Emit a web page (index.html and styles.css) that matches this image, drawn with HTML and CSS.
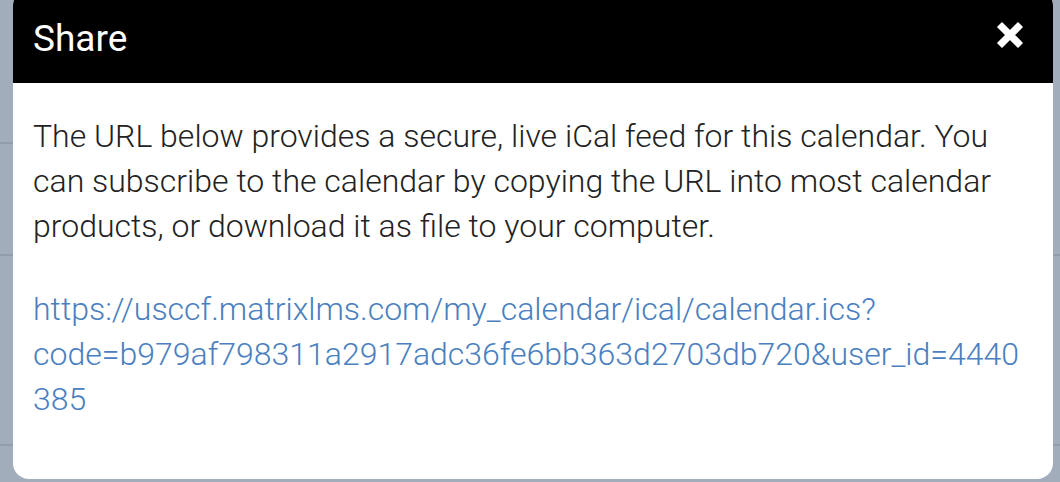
FILE: index.html
```html
<!DOCTYPE html>
<html lang="en">
<head>
<meta charset="utf-8">
<title>Share</title>
<link rel="stylesheet" href="styles.css">
</head>
<body>
<div class="backdrop">
  <div class="modal">
    <div class="modal-header">
      <h2 class="modal-title">Share</h2>
      <button class="close" aria-label="Close">
        <svg viewBox="-1 -1 26 26" width="26" height="26" aria-hidden="true">
          <path d="M0 4 L4 0 L12 8 L20 0 L24 4 L16 12 L24 20 L20 24 L12 16 L4 24 L0 20 L8 12 Z" fill="#fff" stroke="#fff" stroke-width="1.6" stroke-linejoin="round"/>
        </svg>
      </button>
    </div>
    <div class="modal-body">
      <p class="intro">The URL below provides a secure, live iCal feed for this calendar. You can subscribe to the calendar by copying the URL into most calendar products, or download it as file to your computer.</p>
      <p class="feed"><a href="#">https://usccf.matrixlms.com/my_calendar/ical/calendar.ics?<wbr>code=b979af798311a2917adc36fe6bb363d2703db720&amp;user_id=4440385</a></p>
    </div>
  </div>
</div>
</body>
</html>
```

FILE: styles.css
```css
* { box-sizing: border-box; }
html, body {
  margin: 0;
  padding: 0;
  height: 100%;
  overflow: hidden;
}
body {
  font-family: Roboto, "Liberation Sans", sans-serif;
  background-color: #a2adbb;
  background-image:
    linear-gradient(to bottom, transparent 142px, #929dab 142px, #929dab 144px, transparent 144px),
    linear-gradient(to bottom, transparent 254px, #929dab 254px, #929dab 256px, transparent 256px),
    linear-gradient(to bottom, transparent 444px, #929dab 444px, #929dab 446px, transparent 446px);
  background-repeat: no-repeat;
  background-size: 13px 100%, 100% 100%, 100% 100%;
  background-position: 0 0, 0 0, 0 0;
}
.backdrop {
  padding: 0 7px 0 13px;
}
.modal {
  margin-top: -10px;
  width: 1040px;
  height: 489px;
  background: #fff;
  border-radius: 16px;
  overflow: hidden;
}
.modal-header {
  background: #000;
  height: 93px;
  padding: 3px 30px 0 20px;
  display: flex;
  align-items: center;
  justify-content: space-between;
}
.modal-title {
  margin: 0;
  color: #fff;
  font-weight: 400;
  font-size: 37px;
  line-height: 1;
}
.close {
  background: none;
  border: 0;
  padding: 0;
  width: 26px;
  height: 26px;
  margin-top: -6px;
  display: flex;
}
.modal-body {
  padding: 31px 20px 0 20px;
}
.intro, .feed {
  margin: 0;
  font-weight: 300;
  font-size: 32px;
  line-height: 44.8px;
  color: #222;
}
.intro { margin-bottom: 39px; }
.feed a {
  color: #4a80c0;
  text-decoration: none;
  overflow-wrap: anywhere;
}
```
